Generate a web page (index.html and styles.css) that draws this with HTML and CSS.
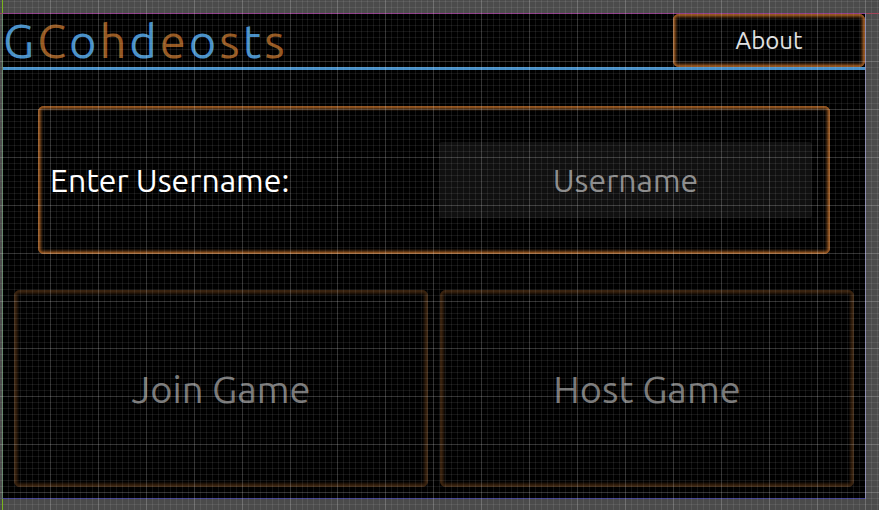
FILE: index.html
```html
<!DOCTYPE html>
<html lang="en">
<head>
<meta charset="utf-8">
<title>GCohdeosts</title>
<link rel="stylesheet" href="styles.css">
</head>
<body>
<main class="screen">
  <header class="header">
    <h1 class="logo"><span>G</span><span>C</span><span>o</span><span>h</span><span>d</span><span>e</span><span>o</span><span>s</span><span>t</span><span>s</span></h1>
    <button class="about glow" type="button">About</button>
  </header>
  <form class="content">
    <div class="panel glow">
      <label for="username">Enter Username:</label>
      <input id="username" type="text" placeholder="Username">
    </div>
    <div class="actions">
      <button class="glow" type="button" disabled>Join Game</button>
      <button class="glow" type="button" disabled>Host Game</button>
    </div>
  </form>
</main>
<svg class="grid" aria-hidden="true"></svg>
<script src="grid.js"></script>
</body>
</html>
```

FILE: styles.css
```css
* {
  box-sizing: border-box;
}

body {
  position: relative;
  display: flex;
  min-height: 100vh;
  margin: 0;
  padding: 13px 13px 11px 2px;
  background: #4b4b4b;
  color: #fff;
  font-family: Ubuntu, "Noto Sans", sans-serif;
}

.screen {
  flex: 1;
  display: flex;
  flex-direction: column;
  border: 1px solid;
  border-color: #91408b #6f6f9c #38388c #66866b;
  background: #000;
}

.header {
  display: flex;
  justify-content: space-between;
  border-bottom: 3px solid #478fc7;
}

.logo {
  display: flex;
  gap: 3px;
  margin: 0;
  color: #478fc7;
  font-size: 47px;
  font-weight: 400;
  line-height: 53px;
}

.logo span:nth-child(even) {
  color: #955821;
}

button,
input {
  margin: 0;
  border: 0;
  color: inherit;
  font: inherit;
}

.glow {
  border-radius: 6px;
  background: #000;
  box-shadow: inset 0 0 0 1px #935521, inset 0 0 0 2px #854c1c,
    inset 0 0 0 3px #583313, inset 0 0 0 4px #321d0b, inset 0 0 0 5px #160d05;
}

.about {
  width: 192px;
  color: #e0e0e0;
  font-size: 24px;
}

.content {
  flex: 1;
  display: flex;
  flex-direction: column;
  gap: 36px;
  padding: 36px 11px 11px;
}

.panel {
  display: grid;
  grid-template-columns: 1fr 1fr;
  gap: 16px;
  align-items: center;
  margin: 0 24px;
  padding: 36px 18px 36px 12px;
  font-size: 32px;
}

.panel input {
  width: 100%;
  height: 76px;
  border-radius: 3px;
  background: #101010;
  text-align: center;
}

.panel input::placeholder {
  color: #8c8c8c;
  opacity: 1;
}

.actions {
  flex: 1;
  display: grid;
  grid-template-columns: 1fr 1fr;
  gap: 12px;
}

.actions button {
  color: #777;
  font-size: 38px;
  box-shadow: inset 0 0 0 2px #38220f, inset 0 0 0 3px #2c1a0a,
    inset 0 0 0 4px #1d1107, inset 0 0 0 5px #0e0803;
}

.grid {
  position: absolute;
  top: 0;
  left: 0;
  width: 100%;
  height: 100%;
  pointer-events: none;
}

.minor {
  fill: #fff;
  fill-opacity: 0.08;
}

.major {
  fill: #fff;
  fill-opacity: 0.2;
}

.axis-x {
  fill: #a04458;
}

.axis-y {
  fill: #7ab51d;
}
```

FILE: grid.js
```js
const svg = document.querySelector(".grid");
const screenBox = document.querySelector(".screen").getBoundingClientRect();
const width = document.body.clientWidth;
const height = document.body.clientHeight;
const cell = 5.99;

function rect(name, x, y, w, h) {
  const node = document.createElementNS("http://www.w3.org/2000/svg", "rect");
  node.setAttribute("class", name);
  node.setAttribute("x", x);
  node.setAttribute("y", y);
  node.setAttribute("width", w);
  node.setAttribute("height", h);
  svg.append(node);
}

// Every eighth line is a major one; lines are counted from the screen's corner.
for (let i = 1; screenBox.left + i * cell < width; i++) {
  rect(i % 8 ? "minor" : "major", Math.floor(screenBox.left + 0.5 + i * cell), 0, 1, height);
}
for (let i = -2; screenBox.top + i * cell < height; i++) {
  if (i !== 0) {
    rect(i % 8 ? "minor" : "major", 0, Math.floor(screenBox.top + 0.5 + i * cell), width, 1);
  }
}

rect("axis-x", 0, screenBox.top, screenBox.left, 1);
rect("axis-x", screenBox.right, screenBox.top, width - screenBox.right, 1);
rect("axis-y", screenBox.left, 0, 1, screenBox.top);
rect("axis-y", screenBox.left, screenBox.bottom, 1, height - screenBox.bottom);
```
